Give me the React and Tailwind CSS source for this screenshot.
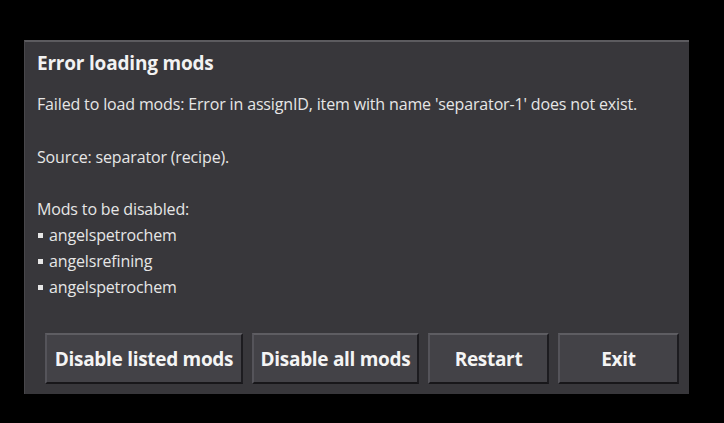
import React from 'react'

const mods = ['angelspetrochem', 'angelsrefining', 'angelspetrochem'];

const buttons = [
    { label: 'Disable listed mods', w: 'w-[198px]' },
    { label: 'Disable all mods', w: 'w-[167px]' },
    { label: 'Restart', w: 'w-[121px]' },
    { label: 'Exit', w: 'w-[121px]' },
];

const App = () => {
    return (
        <div className="w-[724px] h-[423px] bg-black pt-[40px] pl-[24px]" style={{ fontFamily: '"Open Sans", "Noto Sans", sans-serif' }}>
            <div className="w-[665px] h-[354px] bg-[#38373b] border-t-2 border-t-[#5c5b5f] border-l border-l-[#48474b] flex flex-col">
                <h1 className="text-[19px] font-bold text-[#f2f2f2] pl-[12px] pt-[8px] leading-[26px] tracking-[-0.2px]">Error loading mods</h1>
                <div className="pl-[12px] pt-[16px] text-[16px] text-[#e6e6e6] leading-[26px] tracking-[-0.15px]">
                    <p className="-mt-[1px] mb-[1px]">Failed to load mods: Error in assignID, item with name 'separator-1' does not exist.</p>
                    <p className="h-[26px]"></p>
                    <p>Source: separator (recipe).</p>
                    <p className="h-[26px]"></p>
                    <p>Mods to be disabled:</p>
                    {mods.map((m, i) => (
                        <p key={i} className="flex items-center gap-[6px]">
                            <span className="inline-block w-[5px] h-[5px] bg-[#e6e6e6] ml-[1px]"></span>
                            {m}
                        </p>
                    ))}
                </div>
                <div className="flex gap-[9px] pl-[20px] mt-auto mb-[10px]">
                    {buttons.map((b) => (
                        <button
                            key={b.label}
                            className={`${b.w} h-[51px] bg-[#434247] border-t-2 border-l-2 border-t-[#5e5d62] border-l-[#55545a] border-b-2 border-r-2 border-b-[#18171a] border-r-[#1d1c20] text-[19px] font-bold text-[#f4f4f4] tracking-[-0.3px] pt-[2px]`}
                        >
                            {b.label}
                        </button>
                    ))}
                </div>
            </div>
        </div>
    );
}

export default App
